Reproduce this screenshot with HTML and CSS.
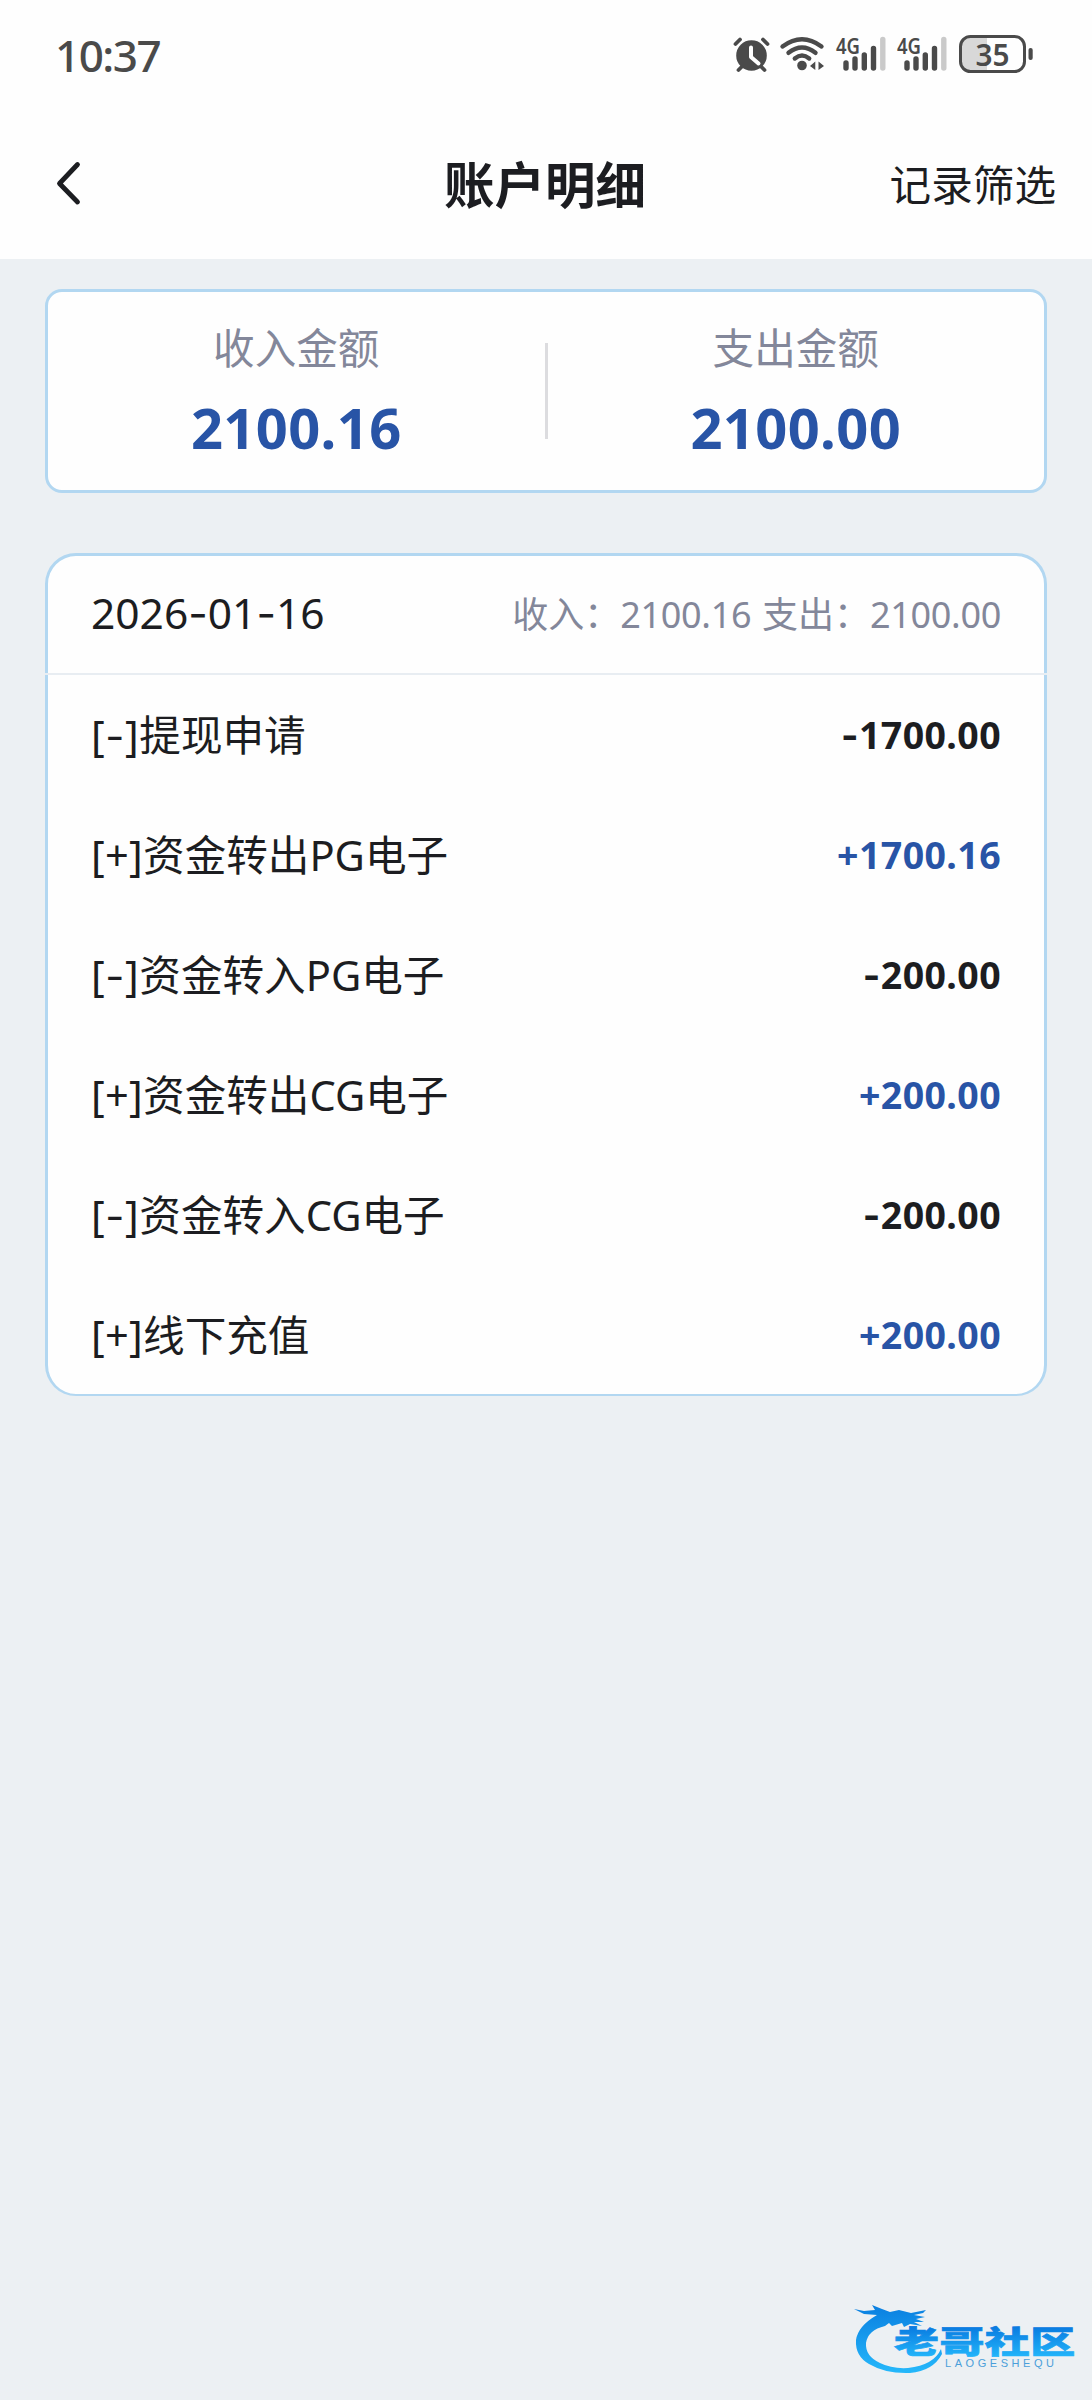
FILE: index.html
```html
<!DOCTYPE html>
<html lang="zh-CN">
<head>
<meta charset="utf-8">
<title>账户明细</title>
<link rel="stylesheet" href="styles.css">
</head>
<body>
<div class="screen">
  <header class="top">
    <div class="status">
      <span class="time">10:37</span>
      <div class="status-icons">
        <svg class="ic-alarm" width="37" height="36" viewBox="0 0 37 36">
          <circle cx="17.500" cy="18.500" r="15.3" fill="#4a4a4a"/>
          <path d="M1.500 7 6 2.500M33.500 7 29 2.500M7.500 30 4.500 33M27.500 30 30.500 33" stroke="#4a4a4a" stroke-width="3.800" stroke-linecap="round"/>
          <path d="M17 10.500V20L24.500 26.500" fill="none" stroke="#fff" stroke-width="4" stroke-linecap="round" stroke-linejoin="round"/>
        </svg>
        <svg class="ic-wifi" width="45" height="36" viewBox="0 0 45 36">
          <g fill="none" stroke="#4a4a4a" stroke-width="4.400" stroke-linecap="round">
            <path d="M2.500 9.500Q22 -5 41.500 9.500"/>
            <path d="M8.500 15.800Q22 5 35.500 15.800"/>
            <path d="M14.800 21.500Q22 15.500 29.200 21.500"/>
          </g>
          <circle cx="22" cy="28.500" r="4.800" fill="#4a4a4a"/>
          <path d="M30 29 35.300 24.500V33ZM38.500 24.500 44 29 38.500 33Z" fill="#4a4a4a"/>
        </svg>
        <svg class="ic-signal" width="50" height="36" viewBox="0 0 50 36">
          <text x="0" y="17" class="net" textLength="24" lengthAdjust="spacingAndGlyphs">4G</text>
          <g stroke="#4a4a4a" stroke-width="5.400" stroke-linecap="round">
            <path d="M10 26V31M19 22V31M28.300 18V31M37.500 11.500V31"/>
            <path d="M46.800 2.500V31" stroke="#cacaca"/>
          </g>
        </svg>
        <svg class="ic-signal" width="50" height="36" viewBox="0 0 50 36">
          <text x="0" y="17" class="net" textLength="24" lengthAdjust="spacingAndGlyphs">4G</text>
          <g stroke="#4a4a4a" stroke-width="5.400" stroke-linecap="round">
            <path d="M10 26V31M19 22V31M28.300 18V31M37.500 11.500V31"/>
            <path d="M46.800 2.500V31" stroke="#cacaca"/>
          </g>
        </svg>
        <svg class="ic-battery" width="75" height="38" viewBox="0 0 75 38">
          <path d="M11 1H28V35H11Q2 35 2 26V10Q2 1 11 1Z" fill="#d8d8d8"/>
          <rect x="1.500" y=".5" width="64" height="35" rx="10" fill="none" stroke="#4a4a4a" stroke-width="3"/>
          <rect x="69.500" y="12" width="4.200" height="12" rx="2" fill="#4a4a4a"/>
          <text x="16.500" y="29.500" class="level" textLength="34" lengthAdjust="spacingAndGlyphs">35</text>
        </svg>
      </div>
    </div>
    <nav class="nav">
      <svg class="back" width="28" height="46" viewBox="0 0 28 46"><path d="M24.500 4.500 6.500 23.500 24.500 42" fill="none" stroke="#1c1d21" stroke-width="4.800" stroke-linecap="round" stroke-linejoin="round"/></svg>
      <h1 class="title">账户明细</h1>
      <span class="filter">记录筛选</span>
    </nav>
  </header>

  <main class="content">
    <section class="summary">
      <div class="total"><span class="label">收入金额</span><span class="sum">2100.16</span></div>
      <div class="split"></div>
      <div class="total"><span class="label">支出金额</span><span class="sum">2100.00</span></div>
    </section>

    <section class="ledger">
      <div class="day">
        <span class="date">2026<i>-</i>01<i>-</i>16</span>
        <span class="day-total">收入：<span class="n">2100.16</span> 支出：<span class="n">2100.00</span></span>
      </div>
      <div class="row"><span class="name"><span class="tag minus">[<i>-</i>]</span>提现申请</span><span class="amount"><i>-</i>1700.00</span></div>
      <div class="row"><span class="name"><span class="tag">[+]</span>资金转出<span class="code">PG</span>电子</span><span class="amount in">+1700.16</span></div>
      <div class="row"><span class="name"><span class="tag minus">[<i>-</i>]</span>资金转入<span class="code">PG</span>电子</span><span class="amount"><i>-</i>200.00</span></div>
      <div class="row"><span class="name"><span class="tag">[+]</span>资金转出<span class="code">CG</span>电子</span><span class="amount in">+200.00</span></div>
      <div class="row"><span class="name"><span class="tag minus">[<i>-</i>]</span>资金转入<span class="code">CG</span>电子</span><span class="amount"><i>-</i>200.00</span></div>
      <div class="row"><span class="name"><span class="tag">[+]</span>线下充值</span><span class="amount in">+200.00</span></div>
    </section>
  </main>

  <svg class="brand" width="232" height="80" viewBox="0 0 232 80">
    <defs>
      <linearGradient id="ring" x1="0" y1="0" x2="0" y2="1"><stop offset="0" stop-color="#0a7fe0"/><stop offset="1" stop-color="#25b8fb"/></linearGradient>
      <linearGradient id="word" x1="0" y1="0" x2="0" y2="1"><stop offset=".2" stop-color="#0878df"/><stop offset=".9" stop-color="#22b5fa"/></linearGradient>
    </defs>
    <path fill="url(#ring)" d="M4 9 14 11 25 10 22 5 32 9 40 12 49 10 61 13 76 10 73 13 64 15 75 17 66 19 74 22 64 22 72 26 60 24 54 27 52 23 42 26 39 23 35 26Q18 30 16 43Q15 56 30 63Q42 69 58 68Q84 65 91 49L92 54Q83 71 60 73Q36 74 19 64Q5 56 6 40Q8 26 27 15L14 14Z"/>
    <text class="brand-name" fill="url(#word)" stroke="url(#word)" transform="translate(44 52.500) scale(1.450 1)" textLength="125" lengthAdjust="spacing">老哥社区</text>
    <text class="brand-sub" x="95" y="67" textLength="109" lengthAdjust="spacing">LAOGESHEQU</text>
  </svg>
</div>
</body>
</html>
```
FILE: styles.css
```css
* { box-sizing: border-box; }
body {
  margin: 0;
  background: #ecf0f3;
  color: #1c1d21;
  font-family: "Noto Sans", "Noto Sans CJK SC", sans-serif;
}
i { font-family: Inter, sans-serif; font-style: normal; line-height: 0; }
svg { overflow: visible; }
.screen { position: relative; height: 2400px; overflow: hidden; }
.top { height: 259px; background: #fefefe; }

.status {
  display: flex;
  justify-content: space-between;
  align-items: center;
  height: 110px;
  padding: 0 58px 0 55px;
}
.time { font-size: 44px; line-height: 60px; color: #4a4a4a; font-weight: 500; letter-spacing: -1.5px; }
.status-icons { display: flex; align-items: center; }
.ic-wifi { margin-left: 9px; }
.ic-signal { margin-left: 11px; }
.ic-battery { margin-left: 12px; }
.net { font: 600 22px "Noto Sans", sans-serif; fill: #4a4a4a; }
.level { font: 600 31px "Noto Sans", sans-serif; fill: #4a4a4a; }

.nav {
  display: grid;
  grid-template-columns: 1fr auto 1fr;
  align-items: center;
  height: 146px;
  padding: 0 36px 0 53px;
}
.back { display: block; }
.title { margin: 0 19px 2px 0; font-size: 50.5px; line-height: 72px; font-weight: 700; font-family: "Noto Sans CJK SC", sans-serif; }
.filter { justify-self: end; margin-bottom: 1px; font-size: 41.6px; line-height: 60px; font-family: "Noto Sans CJK SC", sans-serif; }

.content { padding: 33px 45px 0; margin-top: -3px; }
.summary {
  display: flex;
  align-items: center;
  height: 204px;
  border: 3px solid #b2d7f1;
  border-radius: 17px;
  background: #fefefe;
}
.total { flex: 1; display: flex; flex-direction: column; align-items: center; }
.label { margin-top: -4px; font-size: 41.6px; line-height: 60px; color: #83879a; font-family: "Noto Sans CJK SC", sans-serif; }
.sum { margin-top: 16px; font-size: 56px; line-height: 70px; font-weight: 700; letter-spacing: .4px; color: #2854a6; }
.split { width: 3px; height: 96px; background: #dcdcdf; }

.ledger {
  margin-top: 60px;
  height: 843px;
  border: 3px solid #b2d7f1;
  border-bottom-width: 2px;
  border-radius: 31px;
  background: #fefefe;
}
.day {
  display: flex;
  justify-content: space-between;
  align-items: center;
  height: 119px;
  margin: 0 -3px;
  padding: 0 46px 4px;
  border-bottom: 2px solid #e8edf2;
}
.date { font-size: 42.5px; }
.day-total { font-size: 36px; color: #83879a; word-spacing: 2.5px; font-family: "Noto Sans CJK SC", sans-serif; }
.n { font-family: "Noto Sans", sans-serif; letter-spacing: -.3px; }
.row {
  display: flex;
  justify-content: space-between;
  align-items: center;
  height: 120px;
  padding: 0 43px;
}
.name { padding-bottom: 2px; font-size: 41.6px; line-height: 60px; font-family: "Noto Sans CJK SC", sans-serif; }
.tag, .code { font-family: "Noto Sans", sans-serif; }
.tag { letter-spacing: .3px; }
.minus { letter-spacing: .6px; }
.amount { font-size: 37.5px; line-height: 60px; font-weight: 700; letter-spacing: .4px; }
.in { color: #2854a6; }

.brand { position: absolute; left: 850px; top: 2300px; }
.brand-name { font: 900 31px "Noto Sans CJK SC", sans-serif; stroke-width: .7px; }
.brand-sub { font: 400 11px "Liberation Sans", sans-serif; fill: #4b9fda; }
```
